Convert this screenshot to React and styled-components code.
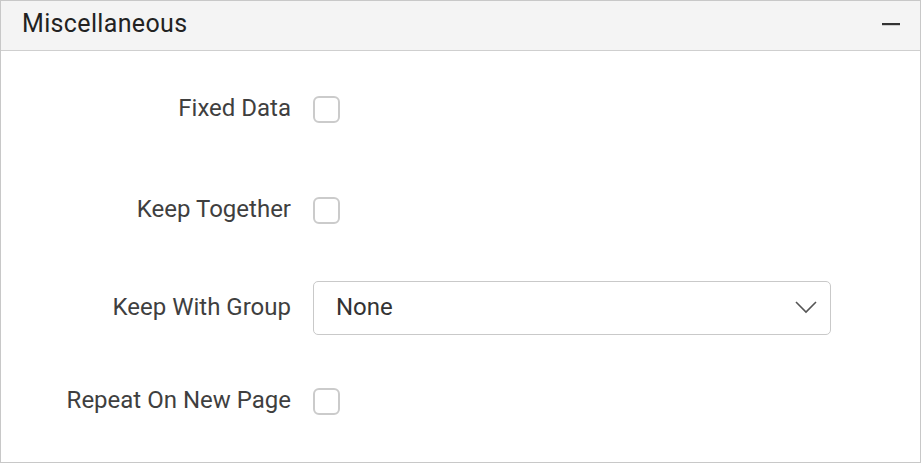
import React from 'react';
import styled, { createGlobalStyle } from 'styled-components';

const GlobalStyle = createGlobalStyle`
  html, body {
    margin: 0;
    padding: 0;
    background: #fff;
    font-family: Roboto, "Liberation Sans", sans-serif;
  }
  * { box-sizing: border-box; }
`;

const Panel = styled.section`
  width: 921px;
  height: 463px;
  border: 1px solid #c8c8c8;
  background: #fff;
  display: flex;
  flex-direction: column;
`;

const Header = styled.header`
  height: 50px;
  flex-shrink: 0;
  background: #f4f4f4;
  border-bottom: 1px solid #cfcfcf;
  display: flex;
  align-items: center;
  justify-content: space-between;
  padding: 0 19px 4px 21px;
`;

const Title = styled.h2`
  margin: 0;
  font-size: 25px;
  font-weight: 400;
  letter-spacing: 0.35px;
  color: #222;
  line-height: 1;
`;

const CollapseButton = styled.button`
  border: 0;
  background: none;
  padding: 0;
  width: 20px;
  height: 20px;
  display: flex;
  align-items: center;
  justify-content: center;
  cursor: pointer;
`;

const Body = styled.div`
  display: flex;
  flex-direction: column;
`;

const Row = styled.div`
  display: grid;
  grid-template-columns: 290px 1fr;
  column-gap: 22px;
  align-items: center;
  height: ${(p) => p.$h}px;
  margin-top: ${(p) => p.$mt}px;
`;

const Label = styled.label`
  text-align: right;
  font-size: 24px;
  color: #3f3f3f;
  padding-bottom: 2px;
`;

const Checkbox = styled.span`
  width: 27px;
  height: 27px;
  border: 2px solid #cbcbcb;
  border-radius: 6px;
  background: #fff;
  display: block;
`;

const Select = styled.div`
  width: 518px;
  height: 54px;
  border: 1px solid #c9c9c9;
  border-radius: 5px;
  display: flex;
  align-items: center;
  justify-content: space-between;
  padding: 0 12px 2px 22px;
  font-size: 24px;
  color: #333;
`;

const fields = [
  { label: 'Fixed Data', type: 'check', mt: 31, h: 54 },
  { label: 'Keep Together', type: 'check', mt: 47, h: 54 },
  { label: 'Keep With Group', type: 'select', mt: 44, h: 54, value: 'None' },
  { label: 'Repeat On New Page', type: 'check', mt: 39, h: 54 },
];

export default function App() {
  return (
    <>
      <GlobalStyle />
      <Panel>
        <Header>
          <Title>Miscellaneous</Title>
          <CollapseButton aria-label="Collapse">
            <svg width="18" height="4" viewBox="0 0 18 4">
              <rect x="0" y="1" width="18" height="2.2" fill="#333" />
            </svg>
          </CollapseButton>
        </Header>
        <Body>
          {fields.map((f) => (
            <Row key={f.label} $mt={f.mt} $h={f.h}>
              <Label>{f.label}</Label>
              {f.type === 'check' ? (
                <Checkbox />
              ) : (
                <Select>
                  {f.value}
                  <svg width="24" height="14" viewBox="0 0 24 14">
                    <path d="M2 2 L12 12 L22 2" fill="none" stroke="#555" strokeWidth="1.6" />
                  </svg>
                </Select>
              )}
            </Row>
          ))}
        </Body>
      </Panel>
    </>
  );
}
